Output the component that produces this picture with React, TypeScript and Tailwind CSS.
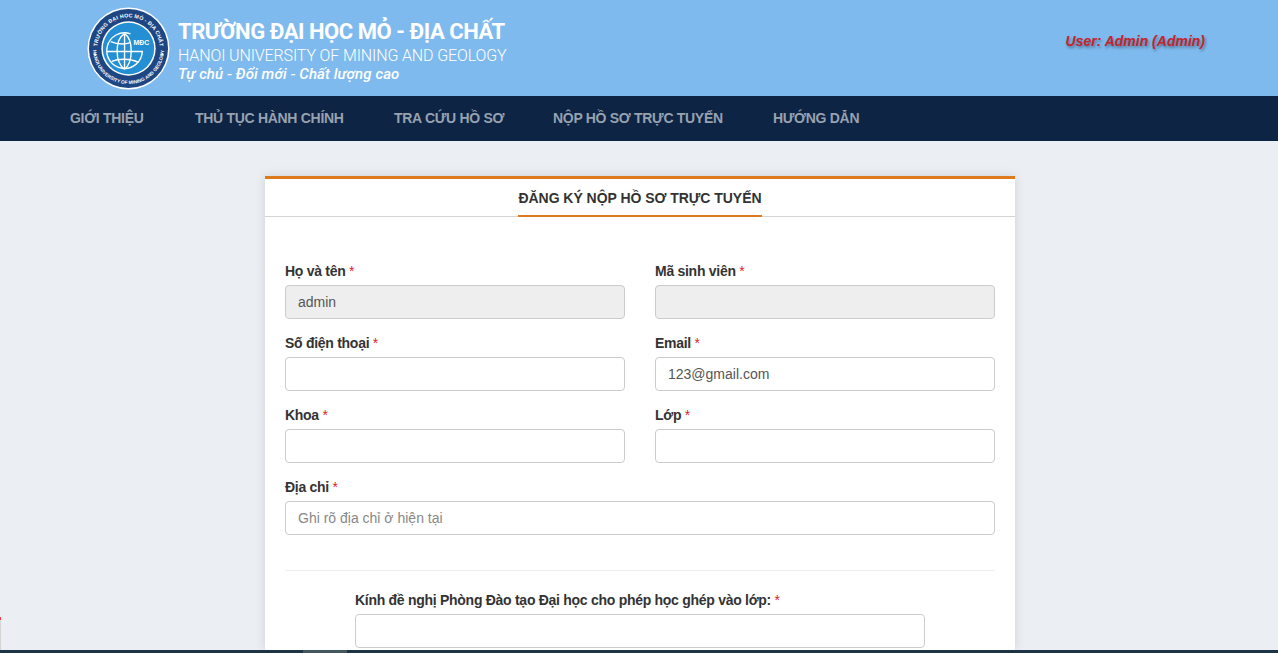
import React from "react";

const Logo: React.FC = () => (
  <svg width="83" height="83" viewBox="0 0 84 84" className="shrink-0">
    <defs>
      <path id="arcTop" d="M 10.5 42 A 31.5 31.5 0 0 1 73.5 42" />
      <path id="arcBottom" d="M 6 42 A 36 36 0 0 0 78 42" />
    </defs>
    <circle cx="42" cy="42" r="41.5" fill="#fff" />
    <circle cx="42" cy="42" r="40" fill="#1d4683" />
    <circle cx="42" cy="42" r="27.500" fill="#fff" />
    <circle cx="42" cy="42" r="26" fill="#2490d3" />
    <text fontSize="5.4" fontWeight="700" fill="#fff" fontFamily="'Liberation Sans', sans-serif" letterSpacing="0.2">
      <textPath href="#arcTop" startOffset="50%" textAnchor="middle">TRƯỜNG ĐẠI HỌC MỎ - ĐỊA CHẤT</textPath>
    </text>
    <text fontSize="4.8" fontWeight="700" fill="#fff" fontFamily="'Liberation Sans', sans-serif">
      <textPath href="#arcBottom" startOffset="50%" textAnchor="middle">HANOI UNIVERSITY OF MINING AND GEOLOGY</textPath>
    </text>
    <circle cx="8" cy="48" r="1.2" fill="#fff" />
    <circle cx="76" cy="48" r="1.2" fill="#fff" />
    <g fill="none" stroke="#fff" strokeWidth="1.4">
      <path d="M44 27.200 A 18 18 0 1 0 56 45 H 20" />
      <path d="M24 35 C 31 38 38 38 44 36" />
      <path d="M25 55 C 32 52 44 52 52 56" />
      <path d="M38 27 C 28 33 28 56 38 63" />
      <path d="M38 27 C 47 33 47 56 38 63" />
      <path d="M38 27 V 63" />
    </g>
    <text x="47" y="38.500" fontSize="7" fontWeight="700" fill="#fff" fontFamily="'Liberation Sans', sans-serif">MĐC</text>
  </svg>
);

const Req: React.FC = () => <span className="font-normal text-[#d9232d]"> *</span>;

type FieldProps = {
  label: string;
  value?: string;
  placeholder?: string;
  disabled?: boolean;
};

const Field: React.FC<FieldProps> = ({ label, value, placeholder, disabled }) => (
  <div className="flex flex-col">
    <label className="h-[20px] text-sm leading-[20px] font-bold tracking-[-0.28px] text-[#333]">
      {label}
      <Req />
    </label>
    <input
      readOnly
      value={value ?? ""}
      placeholder={placeholder}
      className={`mt-[4px] h-[34px] w-full rounded border border-[#ccc] px-[12px] text-sm text-[#555] outline-none placeholder:text-[#888] ${
        disabled ? "bg-[#eee]" : "bg-white"
      }`}
    />
  </div>
);

const navItems = [
  { label: "GIỚI THIỆU", width: "w-[125px]" },
  { label: "THỦ TỤC HÀNH CHÍNH", width: "w-[199px]" },
  { label: "TRA CỨU HỒ SƠ", width: "w-[159px]" },
  { label: "NỘP HỒ SƠ TRỰC TUYẾN", width: "w-[220px]" },
  { label: "HƯỚNG DẪN", width: "w-[130px]" },
];

export default function App() {
  return (
    <div className="relative flex h-screen flex-col overflow-hidden bg-[#ebeef3] font-['Liberation_Sans',Arial,sans-serif]">
      <header className="flex h-[96px] shrink-0 items-start justify-between bg-[#7fbaee] pl-[87px] pr-[73px]">
        <div className="flex items-start pt-[7px]">
          <Logo />
          <div className="ml-[8px] flex flex-col font-['Roboto',sans-serif] text-white">
            <span className="mt-[10px] text-[22px] leading-[29px] font-bold tracking-[-0.45px]">TRƯỜNG ĐẠI HỌC MỎ - ĐỊA CHẤT</span>
            <span className="text-base leading-[20px] font-light tracking-[-0.13px]">HANOI UNIVERSITY OF MINING AND GEOLOGY</span>
            <span className="text-[15px] leading-[16px] font-medium tracking-[0.1px] italic">Tự chủ - Đổi mới - Chất lượng cao</span>
          </div>
        </div>
        <span className="mt-[33px] text-sm leading-4 font-bold text-[#c4242c] italic [text-shadow:1px_2px_3px_rgba(0,0,0,0.4)]">
          User: Admin (Admin)
        </span>
      </header>

      <nav className="flex h-[45px] shrink-0 items-center bg-[#0e2444] pb-[2px] pl-[70px]">
        {navItems.map(item => (
          <a key={item.label} className={`${item.width} text-sm font-bold tracking-[-0.3px] text-[#96a2b0]`}>
            {item.label}
          </a>
        ))}
      </nav>

      <main className="flex min-h-0 flex-1 justify-center overflow-hidden pt-[35px] pl-[2px]">
        <div className="w-[750px] border-t-[3px] border-[#dc7a1c] bg-white shadow-[0_0_10px_rgba(0,0,0,0.12)]">
          <div className="flex h-[38px] justify-center border-b border-[#d4d4d4]">
            <h1 className="h-[38px] border-b-2 border-[#dc7a1c] pt-[10px] text-sm leading-[18px] font-bold tracking-[-0.04px] text-[#333]">
              ĐĂNG KÝ NỘP HỒ SƠ TRỰC TUYẾN
            </h1>
          </div>

          <div className="px-5 pt-[44px]">
            <div className="grid grid-cols-2 gap-x-[30px] gap-y-[14px]">
              <Field label="Họ và tên" value="admin" disabled />
              <Field label="Mã sinh viên" disabled />
              <Field label="Số điện thoại" />
              <Field label="Email" value="123@gmail.com" />
              <Field label="Khoa" />
              <Field label="Lớp" />
              <div className="col-span-2">
                <Field label="Địa chỉ" placeholder="Ghi rõ địa chỉ ở hiện tại" />
              </div>
            </div>

            <hr className="mt-[35px] border-[#eee]" />

            <div className="mt-[19px] ml-[70px] w-[570px]">
              <Field label="Kính đề nghị Phòng Đào tạo Đại học cho phép học ghép vào lớp:" />
            </div>
          </div>
        </div>
      </main>

      <div className="flex h-[3px] shrink-0 bg-[#1c3444]">
        <div className="ml-[303px] h-full w-[44px] bg-[#44575f]" />
      </div>

      <div className="absolute bottom-[3px] left-0 h-[33px] w-px bg-[#d5d5d5]">
        <div className="h-[3px] w-px bg-[#f0424c]" />
      </div>
    </div>
  );
}
